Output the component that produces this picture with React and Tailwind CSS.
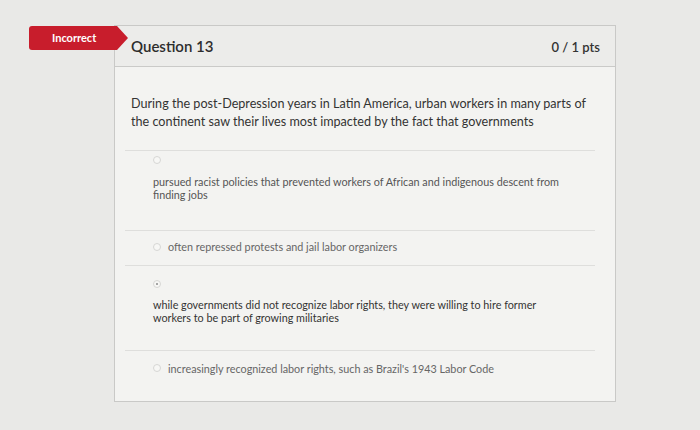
import React from 'react'

const font = { fontFamily: 'Lato, "Open Sans", sans-serif' }

function Radio({ checked }) {
  return (
    <span className="w-[8px] h-[8px] rounded-full border border-[#d6d6d4] bg-[#f7f7f5] flex items-center justify-center shrink-0">
      {checked && <span className="w-[2px] h-[2px] rounded-full bg-[#888]" />}
    </span>
  )
}

export default function App() {
  return (
    <div className="w-[700px] h-[430px] bg-[#e9e9e7] overflow-hidden pt-[25px] pl-[114px]" style={font}>
      <div className="relative w-[502px] h-[377px] border border-[#c9c9c7] bg-[#f3f3f1]">
        <div className="absolute left-[-86px] top-[0px] flex items-center">
          <div className="h-[24px] w-[88px] bg-[#c81d2c] rounded-l-[3px] flex items-center pl-[23px] text-white text-[11px] font-bold">
            Incorrect
          </div>
          <div className="w-0 h-0 border-t-[12px] border-b-[12px] border-l-[11px] border-t-transparent border-b-transparent border-l-[#c81d2c]" />
        </div>

        <div className="h-[41px] bg-[#ececea] border-b border-[#cacac8] flex items-center justify-between pl-[16px] pr-[15px]">
          <span className="text-[15px] font-semibold text-[#2d2d2d]">Question 13</span>
          <span className="text-[13px] font-semibold text-[#333] mt-[4px]">0 / 1 pts</span>
        </div>

        <div className="pt-[28px] pl-[16px] pr-[20px]">
          <p className="text-[12.6px] leading-[18px] text-[#333] w-[462px]">
            During the post-Depression years in Latin America, urban workers in many parts of the continent saw their lives most impacted by the fact that governments
          </p>
        </div>

        <div className="mt-[19px] mx-[10px] w-[470px] flex flex-col">
          <div className="h-[80px] border-t border-[#dededc] pt-[5px] pl-[28px]">
            <Radio />
            <p className="mt-[11px] text-[10.8px] leading-[13px] text-[#555] w-[425px]">
              pursued racist policies that prevented workers of African and indigenous descent from finding jobs
            </p>
          </div>
          <div className="h-[35px] border-t border-[#dededc] flex items-center pl-[28px] gap-[7px] pb-[2px]">
            <Radio />
            <span className="text-[10.8px] text-[#666]">often repressed protests and jail labor organizers</span>
          </div>
          <div className="h-[85px] border-t border-[#dededc] pt-[14px] pl-[28px]">
            <Radio checked />
            <p className="mt-[10px] text-[10.8px] leading-[13px] text-[#333] w-[395px]">
              while governments did not recognize labor rights, they were willing to hire former workers to be part of growing militaries
            </p>
          </div>
          <div className="h-[50px] border-t border-[#dededc] flex items-start pt-[13px] pl-[28px] gap-[7px]">
            <Radio />
            <span className="text-[10.8px] text-[#666] -mt-[3px]">increasingly recognized labor rights, such as Brazil's 1943 Labor Code</span>
          </div>
        </div>
      </div>
    </div>
  )
}
